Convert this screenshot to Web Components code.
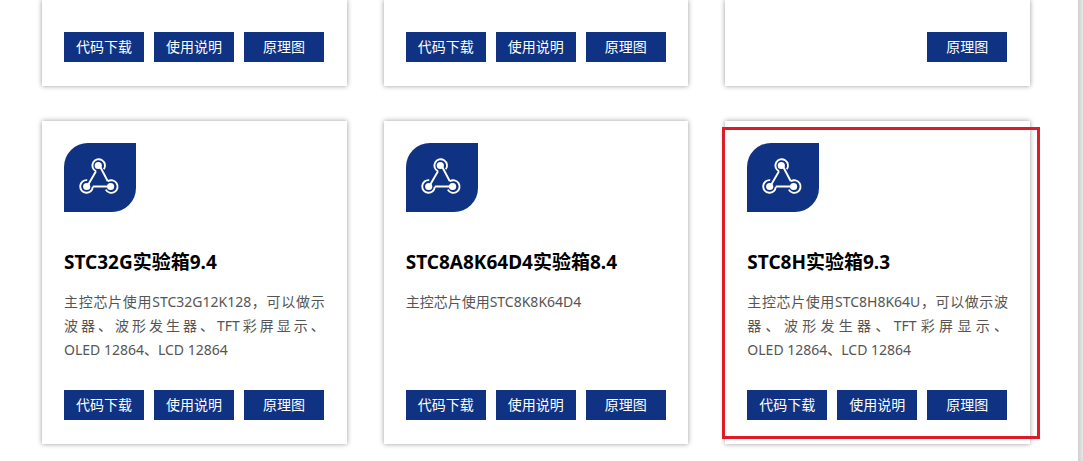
<!DOCTYPE html>
<html lang="zh-CN">
<head>
<meta charset="utf-8">
<title>STC 实验箱</title>
<style>
body { margin: 0; background: #fff; font-family: "Noto Sans", "Noto Sans CJK SC", sans-serif; }
.keep { white-space: nowrap; }
</style>
</head>
<body>
<template id="t-page">
<style>
:host { display: flex; min-height: 100vh; }
main { flex: 1; min-width: 0; padding: 0 48px 17px 42px; display: grid; grid-template-columns: repeat(3, minmax(0, 1fr)); gap: 35px 37px; align-content: start; }
.edge { width: 5px; background: linear-gradient(90deg, #cfcfcf, #e6e6e6); }
</style>
<main><slot></slot></main>
<div class="edge"></div>
</template>

<template id="t-card">
<style>
:host { display: flex; flex-direction: column; position: relative; box-sizing: border-box; padding: 22px 22px 24px; background: #fff; box-shadow: 0 0 5px rgba(0, 0, 0, .4); }
:host([compact]) { padding-top: 32px; }
:host([marked])::after { content: ""; position: absolute; inset: 6px -10px 5px -3px; border: 3px solid #dc1c26; pointer-events: none; }
h3 { margin: 37px 0 15px; font-size: 19px; line-height: 26px; font-weight: 700; color: #000; white-space: nowrap; }
p { margin: 0 0 28px; min-height: 72px; font-size: 14px; line-height: 24px; font-weight: 400; color: #555; text-align: justify; }
.actions { display: grid; grid-template-columns: repeat(3, 80px); gap: 10px; }
:host([compact]) h3, :host([compact]) p, :host([compact]) kit-icon { display: none; }
</style>
<kit-icon></kit-icon>
<h3><slot name="title"></slot></h3>
<p><slot name="text"></slot></p>
<div class="actions"><slot></slot></div>
</template>

<template id="t-icon">
<style>
:host { display: block; width: 72px; height: 69px; background: #103282; border-radius: 24px 0; overflow: hidden; }
svg { display: block; }
</style>
<svg width="72" height="69" viewBox="0 0 72 69" fill="none" stroke="#fff" stroke-width="1.9" aria-hidden="true">
<path d="M32 28.2A6.3 6.3 0 1 1 39.8 26.2"/>
<path d="M23.2 37.2A6.3 6.3 0 1 0 28.8 43.8"/>
<path d="M43.8 38.3A6.3 6.3 0 1 1 41.8 46.6"/>
<path d="M32 28.2L24 42M36 23.5L43.8 38.3M28.8 43.5H46"/>
<g fill="#fff" stroke="none"><circle cx="34.3" cy="22.5" r="3.6"/><circle cx="22.7" cy="43.5" r="3.6"/><circle cx="46.6" cy="43.5" r="3.6"/></g>
</svg>
</template>

<template id="t-link">
<style>
:host { display: block; }
:host([last]) { grid-column: 3; }
a { display: block; font-size: 14px; line-height: 30px; text-align: center; color: #fff; background: #103282; text-decoration: none; white-space: nowrap; }
</style>
<a href="#"><slot></slot></a>
</template>

<kit-page>
<kit-card compact><kit-link>代码下载</kit-link><kit-link>使用说明</kit-link><kit-link>原理图</kit-link></kit-card>
<kit-card compact><kit-link>代码下载</kit-link><kit-link>使用说明</kit-link><kit-link>原理图</kit-link></kit-card>
<kit-card compact><kit-link last>原理图</kit-link></kit-card>
<kit-card><span slot="title">STC32G实验箱9.4</span><span slot="text">主控芯片使用STC32G12K128，可以做示波器、波形发生器、TFT彩屏显示、<span class="keep">OLED 12864</span>、LCD 12864</span><kit-link>代码下载</kit-link><kit-link>使用说明</kit-link><kit-link>原理图</kit-link></kit-card>
<kit-card><span slot="title">STC8A8K64D4实验箱8.4</span><span slot="text">主控芯片使用STC8K8K64D4</span><kit-link>代码下载</kit-link><kit-link>使用说明</kit-link><kit-link>原理图</kit-link></kit-card>
<kit-card marked><span slot="title">STC8H实验箱9.3</span><span slot="text">主控芯片使用STC8H8K64U，可以做示波器、波形发生器、TFT彩屏显示、<span class="keep">OLED 12864</span>、LCD 12864</span><kit-link>代码下载</kit-link><kit-link>使用说明</kit-link><kit-link>原理图</kit-link></kit-card>
</kit-page>

<script>
class KitElement extends HTMLElement {
  constructor() {
    super();
    const template = document.getElementById(this.constructor.template);
    this.attachShadow({ mode: "open" }).append(template.content.cloneNode(true));
  }
}
customElements.define("kit-icon", class extends KitElement { static template = "t-icon"; });
customElements.define("kit-link", class extends KitElement { static template = "t-link"; });
customElements.define("kit-card", class extends KitElement { static template = "t-card"; });
customElements.define("kit-page", class extends KitElement { static template = "t-page"; });
</script>
</body>
</html>
